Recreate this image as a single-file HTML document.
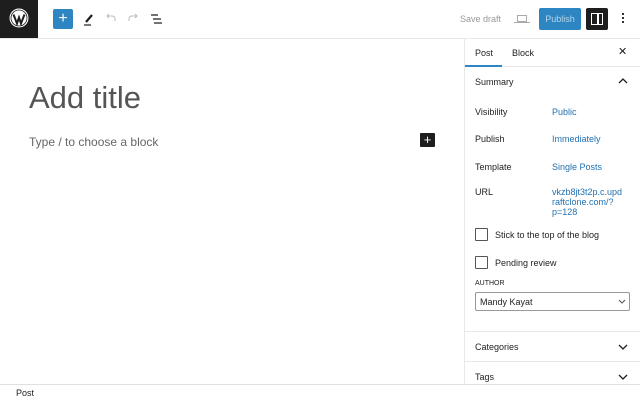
<!DOCTYPE html>
<html><head><style>
*{margin:0;padding:0;box-sizing:border-box}
body{width:640px;height:400px;overflow:hidden;background:#fff;font-family:"Liberation Sans",sans-serif;color:#1e1e1e;position:relative}
.a{position:absolute}
.t{font-size:9px;white-space:nowrap}
.l{color:#2271b1}
</style></head><body>
<div class="a" style="left:0;top:0;width:38px;height:38px;background:#1e1e1e"></div>
<svg class="a" style="left:9px;top:8px" width="20" height="20" viewBox="0 0 20 20"><circle cx="10" cy="10" r="9.5" fill="#fff"/><circle cx="10" cy="10" r="8" fill="none" stroke="#1e1e1e" stroke-width="0.8"/><path d="M4.5 6.5 L8 15.5 L10 9.5 L12 15.5 L15.5 6.5" fill="none" stroke="#1e1e1e" stroke-width="2"/></svg>
<div class="a" style="left:0;top:38px;width:640px;height:1px;background:#e8e8e8"></div>
<div class="a" style="left:53px;top:9px;width:20px;height:20px;background:#2d85c1;border-radius:2px;color:#fff;font-size:16px;line-height:20px;text-align:center">+</div>
<svg class="a" style="left:83px;top:12px" width="12" height="14"><path d="M3 10 L9 3" stroke="#1e1e1e" stroke-width="2.2"/><path d="M1 13 H8" stroke="#1e1e1e" stroke-width="1.2"/></svg>
<svg class="a" style="left:105px;top:13px" width="12" height="10"><path d="M10 8 V6 Q10 3 7 3 H2 M4 1 L2 3 L4 5" fill="none" stroke="#bbb" stroke-width="1"/></svg>
<svg class="a" style="left:127px;top:13px" width="12" height="10"><path d="M2 8 V6 Q2 3 5 3 H10 M8 1 L10 3 L8 5" fill="none" stroke="#bbb" stroke-width="1"/></svg>
<svg class="a" style="left:150px;top:13px" width="14" height="12"><path d="M1 2 H8 M3 6 H11 M4 10 H12" stroke="#1e1e1e" stroke-width="1.2"/></svg>
<div class="a t" style="left:460px;top:14px;color:#999">Save draft</div>
<div class="a" style="left:517px;top:15px;width:10px;height:7px;border:1px solid #aaa"></div>
<div class="a" style="left:514px;top:22px;width:16px;height:1px;background:#aaa"></div>
<div class="a" style="left:539px;top:8px;width:42px;height:22px;background:#2d85c1;border-radius:2px;color:#b5d6ee;font-size:9px;line-height:22px;text-align:center">Publish</div>
<div class="a" style="left:586px;top:8px;width:22px;height:22px;background:#1e1e1e;border-radius:2px"></div>
<div class="a" style="left:591px;top:13px;width:12px;height:12px;border:1.5px solid #fff"></div>
<div class="a" style="left:597px;top:13px;width:1.5px;height:12px;background:#fff"></div>
<div class="a" style="left:622px;top:13px;width:2px;height:2px;background:#333;box-shadow:0 4px #333,0 8px #333"></div>

<div class="a" style="left:29px;top:80px;font-size:31px;color:#555">Add title</div>
<div class="a" style="left:29px;top:135px;font-size:12px;color:#666">Type / to choose a block</div>
<div class="a" style="left:420px;top:133px;width:15px;height:14px;background:#1e1e1e;border-radius:1px;color:#fff;font-size:13px;line-height:14px;text-align:center">+</div>

<div class="a" style="left:464px;top:39px;width:1px;height:346px;background:#e8e8e8"></div>
<div class="a t" style="left:475px;top:48px">Post</div>
<div class="a t" style="left:512px;top:48px">Block</div>
<div class="a" style="left:618px;top:45px;font-size:11px">✕</div>
<div class="a" style="left:465px;top:66px;width:175px;height:1px;background:#e8e8e8"></div>
<div class="a" style="left:465px;top:65px;width:37px;height:2px;background:#2d85c1"></div>
<div class="a t" style="left:475px;top:77px">Summary</div>
<svg class="a" style="left:618px;top:78px" width="10" height="7"><path d="M1 5 L5 1 L9 5" fill="none" stroke="#1e1e1e" stroke-width="1.3"/></svg>
<div class="a t" style="left:475px;top:107px">Visibility</div><div class="a t l" style="left:552px;top:107px">Public</div>
<div class="a t" style="left:475px;top:134px">Publish</div><div class="a t l" style="left:552px;top:134px">Immediately</div>
<div class="a t" style="left:475px;top:162px">Template</div><div class="a t l" style="left:552px;top:162px">Single Posts</div>
<div class="a t" style="left:475px;top:187px">URL</div>
<div class="a t l" style="left:552px;top:187px;line-height:10px">vkzb8jt3t2p.c.upd<br>raftclone.com/?<br>p=128</div>
<div class="a" style="left:475px;top:228px;width:13px;height:13px;border:1px solid #555;border-radius:1px"></div>
<div class="a t" style="left:495px;top:230px">Stick to the top of the blog</div>
<div class="a" style="left:475px;top:256px;width:13px;height:13px;border:1px solid #555;border-radius:1px"></div>
<div class="a t" style="left:495px;top:258px">Pending review</div>
<div class="a" style="left:475px;top:280px;font-size:7px">AUTHOR</div>
<div class="a" style="left:475px;top:292px;width:155px;height:19px;border:1px solid #999;border-radius:2px"></div>
<div class="a t" style="left:480px;top:297px">Mandy Kayat</div>
<svg class="a" style="left:618px;top:299px" width="8" height="6"><path d="M1 1 L4 4 L7 1" fill="none" stroke="#555" stroke-width="1"/></svg>
<div class="a" style="left:465px;top:331px;width:175px;height:1px;background:#e8e8e8"></div>
<div class="a t" style="left:475px;top:342px">Categories</div>
<svg class="a" style="left:618px;top:344px" width="10" height="7"><path d="M1 1 L5 5 L9 1" fill="none" stroke="#1e1e1e" stroke-width="1.3"/></svg>
<div class="a" style="left:465px;top:361px;width:175px;height:1px;background:#e8e8e8"></div>
<div class="a t" style="left:475px;top:372px">Tags</div>
<svg class="a" style="left:618px;top:374px" width="10" height="7"><path d="M1 1 L5 5 L9 1" fill="none" stroke="#1e1e1e" stroke-width="1.3"/></svg>
<div class="a" style="left:0;top:384px;width:640px;height:16px;background:#fff;border-top:1px solid #e0e0e0"></div>
<div class="a t" style="left:16px;top:388px">Post</div>
</body></html>
